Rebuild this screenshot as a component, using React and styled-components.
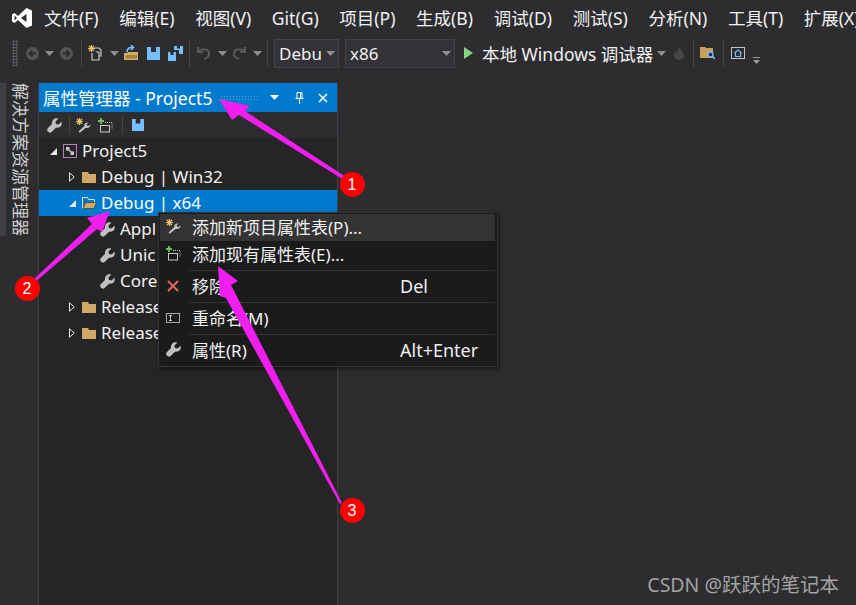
import React from 'react'
import styled, { createGlobalStyle } from 'styled-components'

const GlobalStyle = createGlobalStyle`
  html, body { margin: 0; padding: 0; background: #2d2d30; }
  body { font-family: "Noto Sans", "Noto Sans CJK SC", sans-serif; }
`

const Page = styled.div`
  position: relative;
  width: 856px;
  height: 605px;
  overflow: hidden;
  background: #2d2d30;
  color: #f1f1f1;
  font-size: 17.5px;
  display: flex;
  flex-direction: column;
`

const MenuBar = styled.div`
  height: 36px;
  display: flex;
  align-items: center;
  flex: none;
  box-sizing: border-box;
`

const LogoSlot = styled.div`
  width: 33.6px;
  flex: none;
  padding-left: 12px;
  box-sizing: border-box;
  display: flex;
`

const MenuItem = styled.div`
  padding: 0 10.35px;
  white-space: nowrap;
  flex: none;
  line-height: 24px;
`

const ToolBar = styled.div`
  height: 30px;
  margin-top: 2px;
  padding-left: 12px;
  display: flex;
  align-items: center;
  flex: none;
`

const Grip = styled.div`
  width: 6px;
  height: 26px;
  margin-right: 4px;
  flex: none;
  background-image: radial-gradient(circle, #55555a 1px, transparent 1.1px);
  background-size: 3px 3px;
`

const Tool = styled.div`
  width: ${p => p.$w}px;
  height: 22px;
  flex: none;
  display: flex;
  align-items: center;
  justify-content: center;
`

const Sep = styled.div`
  width: 1px;
  height: ${p => p.$h || 27}px;
  flex: none;
  margin-left: ${p => p.$l}px;
  margin-right: ${p => p.$r}px;
  background: #46464a;
`

const Combo = styled.div`
  width: ${p => p.$w}px;
  height: 29px;
  margin-right: ${p => p.$mr || 0}px;
  flex: none;
  box-sizing: border-box;
  border: 1px solid #434346;
  background: #333337;
  display: flex;
  align-items: center;
  justify-content: space-between;
  padding: 0 3px 0 4px;
  overflow: hidden;
  white-space: nowrap;
  font-size: 17px;
`

const RunLabel = styled.div`
  width: 170px;
  flex: none;
  white-space: nowrap;
`

const Body = styled.div`
  flex: 1;
  display: flex;
  margin-top: 15px;
  min-height: 0;
`

const SideRail = styled.div`
  width: 38px;
  flex: none;
  display: flex;
  align-items: flex-start;
  gap: 4px;
`

const RailBar = styled.div`
  width: 6px;
  height: 153px;
  background: #3f3f46;
`

const RailText = styled.div`
  writing-mode: vertical-rl;
  text-orientation: sideways;
  font-size: 17px;
  line-height: 20px;
  color: #d0d0d0;
  white-space: nowrap;
`

const Panel = styled.div`
  width: 300px;
  flex: none;
  box-sizing: border-box;
  background: #252526;
  border-left: 1px solid #3f3f46;
  border-right: 1px solid #3f3f46;
  display: flex;
  flex-direction: column;
`

const TitleBar = styled.div`
  height: 29px;
  flex: none;
  background: #007acc;
  color: #fff;
  display: flex;
  align-items: center;
  padding-left: 4px;
  font-size: 17.5px;
`

const TitleText = styled.div`
  width: 177px;
  flex: none;
  white-space: nowrap;
`

const TitleGrip = styled.div`
  width: 39px;
  height: 5px;
  flex: none;
  background-image: radial-gradient(circle, #59a8e0 0.8px, transparent 1px);
  background-size: 3px 3px;
`

const TitleButton = styled.div`
  width: ${p => p.$w}px;
  flex: none;
  display: flex;
  justify-content: center;
`

const PanelTools = styled.div`
  height: 26px;
  flex: none;
  background: #2d2d30;
  display: flex;
  align-items: center;
  padding-left: 5px;
`

const Tree = styled.div`
  display: flex;
  flex-direction: column;
  font-size: 17px;
`

const Row = styled.div`
  height: 26px;
  box-sizing: border-box;
  padding-bottom: 2px;
  display: flex;
  align-items: center;
  padding-left: ${p => p.$indent}px;
  background: ${p => (p.$selected ? '#007acc' : 'transparent')};
  color: ${p => (p.$selected ? '#fff' : '#f1f1f1')};
  white-space: nowrap;
`

const Twist = styled.div`
  width: 10px;
  flex: none;
  display: flex;
  justify-content: center;
  margin: 2px 4px 0 0;
`

const RowIcon = styled.div`
  width: 16px;
  flex: none;
  display: flex;
  justify-content: center;
  margin-top: 2px;
  margin-right: ${p => p.$gap}px;
`

const Menu = styled.div`
  position: absolute;
  left: 158px;
  top: 212px;
  width: 340px;
  box-sizing: border-box;
  padding: 1px 2px 2px 1px;
  background: #1b1b1c;
  border: 1px solid #333337;
  box-shadow: 2px 2px 4px rgba(0, 0, 0, 0.45);
  font-size: 17px;
`

const MenuRow = styled.div`
  height: 27px;
  box-sizing: border-box;
  padding-bottom: 2px;
  display: flex;
  align-items: center;
  background: ${p => (p.$hot ? '#333334' : 'transparent')};
`

const MenuIcon = styled.div`
  width: 26px;
  margin-right: 6px;
  flex: none;
  display: flex;
  justify-content: center;
`

const MenuLabel = styled.div`
  width: 208px;
  flex: none;
  white-space: nowrap;
`

const MenuKey = styled.div`
  font-size: 18px;
  white-space: nowrap;
`

const MenuSep = styled.div`
  height: 1px;
  margin: 2px 0 2px 29px;
  background: #333337;
`

const Overlay = styled.svg`
  position: absolute;
  left: 0;
  top: 0;
  pointer-events: none;
`

const Badge = styled.div`
  position: absolute;
  left: ${p => p.$x - 12.5}px;
  top: ${p => p.$y - 12.5}px;
  width: 25px;
  height: 25px;
  border-radius: 50%;
  background: #ff0000;
  color: #fff;
  font-family: "Liberation Sans", sans-serif;
  font-size: 16px;
  line-height: 25px;
  text-align: center;
`

const Watermark = styled.div`
  position: absolute;
  right: 17px;
  top: 572px;
  font-size: 19.5px;
  line-height: 26px;
  color: #a3a3a3;
  white-space: nowrap;
`

// little drawings
const Caret = ({ c = '#8f8f92' }) => (
  <svg width="9" height="5" viewBox="0 0 9 5"><path d="M0 0h9L4.500 5z" fill={c} /></svg>
)

const Logo = () => (
  <svg width="20" height="20" viewBox="0 0 20 20">
    <path fillRule="evenodd" fill="#fff" d="M14.500 0 20 2.500v15L14.500 20 6 12l-3.500 3L0 13.500v-7L2.500 5 6 8zM2.500 7.500v5L5 10zM14.500 6 9 10l5.500 4z" />
  </svg>
)

const NavIcon = ({ flip }) => (
  <svg width="13" height="13" viewBox="0 0 13 13">
    <circle cx="6.500" cy="6.500" r="6.500" fill="#555558" />
    <path d={flip ? 'M3 6.500h6M6.500 3.500l3 3-3 3' : 'M10 6.500H4M6.500 3.500l-3 3 3 3'} stroke="#2d2d30" strokeWidth="2" fill="none" />
  </svg>
)

const Spark = ({ x = 0, y = 0 }) => (
  <path transform={`translate(${x} ${y})`} d="M3.500 0v7M0 3.500h7M1 1l5 5M6 1 1 6" stroke="#e8c26b" strokeWidth="1.200" fill="none" />
)

const NewProjectIcon = () => (
  <svg width="14" height="16" viewBox="0 0 14 16">
    <path d="M6 3h5l2 2v6h-2M4 8v7h7V7H8" stroke="#c8c8c8" strokeWidth="1.200" fill="none" />
    <Spark />
  </svg>
)

const OpenIcon = () => (
  <svg width="15" height="16" viewBox="0 0 15 16">
    <path d="M0 15V8h3l1-1h10v8z" fill="#d4ab68" />
    <path d="M1 13.500 2.500 10H13v3.500z" fill="#a5823f" />
    <path d="M3 7c0-3.500 3-5 5.500-4.500M7 0l2.500 2.500L7 5" stroke="#75beff" strokeWidth="1.600" fill="none" />
  </svg>
)

const SaveIcon = ({ size = 13 }) => (
  <svg width={size} height={size} viewBox="0 0 13 13">
    <path fillRule="evenodd" d="M0 0h13v13H0zM4 0v5h5V0z" fill="#75beff" />
  </svg>
)

const SaveAllIcon = () => (
  <svg width="15" height="15" viewBox="0 0 15 15">
    <path fillRule="evenodd" d="M6 0h9v8h-4V4H6zM9 0v2.500h3V0z" fill="#75beff" />
    <path fillRule="evenodd" d="M0 6h8v9H0zM2.500 6v3h3V6z" fill="#75beff" />
  </svg>
)

const UndoIcon = ({ flip }) => (
  <svg width="14" height="14" viewBox="0 0 14 14" style={flip ? { transform: 'scaleX(-1)' } : undefined}>
    <path d="M1 1v5h5M1.500 5.500C4 2.500 11 2.500 12 6.500c.5 3-2 5.500-5 6.500" stroke="#5a5a5d" strokeWidth="2" fill="none" />
  </svg>
)

const PlayIcon = () => (
  <svg width="9" height="12" viewBox="0 0 9 12"><path d="M0 0l9 6-9 6z" fill="#89d185" /></svg>
)

const FlameIcon = () => (
  <svg width="10" height="13" viewBox="0 0 10 13">
    <path d="M5 0c1 2.500 5 4.500 5 8.500S7 13 5 13 0 11.500 0 8.500c0-2 1-3 1.500-4 .5 1 1 1.500 1.500 1.500C3 4 4 2 5 0z" fill="#474749" />
  </svg>
)

const FolderSearchIcon = () => (
  <svg width="15" height="14" viewBox="0 0 15 14">
    <path d="M0 1h5l1 1h7v10H0z" fill="#c9a15f" />
    <circle cx="10.500" cy="8.500" r="2.500" fill="#2d2d30" stroke="#75beff" strokeWidth="1.300" />
    <path d="M12.500 10.500 15 13" stroke="#75beff" strokeWidth="1.600" />
  </svg>
)

const HomeIcon = () => (
  <svg width="14" height="12" viewBox="0 0 14 12">
    <rect x=".5" y=".5" width="13" height="11" fill="none" stroke="#c4c4c4" />
    <path d="M3.500 6 7 3l3.500 3M4.500 5.500V9.500h5V5.500" fill="none" stroke="#75beff" strokeWidth="1.100" />
  </svg>
)

const OverflowIcon = () => (
  <svg width="7" height="7" viewBox="0 0 7 7" style={{ marginTop: 14 }}>
    <path d="M0 .5h7" stroke="#999" />
    <path d="M0 3h7L3.500 7z" fill="#999" />
  </svg>
)

const PinIcon = () => (
  <svg width="9" height="12" viewBox="0 0 9 12">
    <path d="M2 .5h5v6H2zM.5 6.500h8M4.500 7v5M5.500 1v5" stroke="#fff" fill="none" />
  </svg>
)

const CloseIcon = () => (
  <svg width="10" height="10" viewBox="0 0 10 10">
    <path d="M1 1l8 8M9 1 1 9" stroke="#fff" strokeWidth="1.500" />
  </svg>
)

const WrenchIcon = ({ size = 15 }) => (
  <svg width={size} height={size} viewBox="0 0 16 16">
    <path d="M15.500 4 12.300 7 9.500 6.500 9 3.700 12 .8C9-.6 5 1.500 5.300 6.300L.8 11c-1.200 1.200-.4 3 .4 3.700.8.800 2.500 1.400 3.700.3l4.700-4.500C14 10.800 16.700 8 15.500 4z" fill="#c0c0c0" />
  </svg>
)

const WandWrenchIcon = () => (
  <svg width="15" height="15" viewBox="0 0 15 15">
    <path d="M14.500 6.500 12.500 8 11 7.500l-.3-1.500L12.500 4.500C10.500 4 8 5 8.300 8L3 13c-.6.8.2 2 1.200 1.500L9.500 10c2.500.5 5.500-1 5-3.500z" fill="#c0c0c0" />
    <Spark />
  </svg>
)

const AddExistingIcon = () => (
  <svg width="15" height="15" viewBox="0 0 15 15">
    <path d="M3 0v6M0 3h6" stroke="#6cc35a" strokeWidth="1.800" />
    <rect x="2.500" y="7.500" width="9" height="6.500" fill="none" stroke="#c8c8c8" />
    <path d="M7 4.500h7v7" fill="none" stroke="#c8c8c8" strokeDasharray="1 1" />
  </svg>
)

const RemoveIcon = () => (
  <svg width="12" height="12" viewBox="0 0 12 12">
    <path d="M1 1l10 10M11 1 1 11" stroke="#e0685a" strokeWidth="2" />
  </svg>
)

const RenameIcon = () => (
  <svg width="14" height="10" viewBox="0 0 14 10">
    <rect x=".5" y=".5" width="13" height="9" fill="none" stroke="#a8a8a8" />
    <path d="M3 2.500h3M3 7.500h3M4.500 2.500v5" stroke="#c8c8c8" />
  </svg>
)

const ProjectIcon = () => (
  <svg width="14" height="14" viewBox="0 0 14 14">
    <rect x=".5" y=".5" width="13" height="13" fill="none" stroke="#b180b8" />
    <path d="M3 3h3.500v3.500H3zM7.500 7.500H11V11H7.500z" fill="#c8c8c8" />
    <path d="M6 6l2 2" stroke="#c8c8c8" strokeWidth="1.500" />
  </svg>
)

const FolderIcon = () => (
  <svg width="14" height="11" viewBox="0 0 14 11">
    <path d="M0 0h6l1 2h7v9H0z" fill="#d0a868" />
  </svg>
)

const OpenFolderIcon = () => (
  <svg width="15" height="12" viewBox="0 0 15 12">
    <path d="M.5 11.500V.5h5l1 2h6v3" fill="none" stroke="#e8e0d0" />
    <path d="M1 11.500 3.500 5.500H14.500L12 11.500z" fill="#d0a868" stroke="#3a2a10" strokeWidth=".6" />
  </svg>
)

const TwistOpen = () => (
  <svg width="7" height="7" viewBox="0 0 7 7"><path d="M7 0v7H0z" fill="#e8e8e8" /></svg>
)

const TwistClosed = () => (
  <svg width="6" height="10" viewBox="0 0 6 10"><path d="M.5.800 5.200 5 .5 9.200z" fill="none" stroke="#e8e8e8" /></svg>
)

const menus = ['文件(F)', '编辑(E)', '视图(V)', 'Git(G)', '项目(P)', '生成(B)', '调试(D)', '测试(S)', '分析(N)', '工具(T)', '扩展(X)']

export default function App() {
  return (
    <Page>
      <GlobalStyle />
      <MenuBar>
        <LogoSlot><Logo /></LogoSlot>
        {menus.map(m => <MenuItem key={m}>{m}</MenuItem>)}
      </MenuBar>

      <ToolBar>
        <Grip />
        <Tool $w={20}><NavIcon /></Tool>
        <Tool $w={14}><Caret /></Tool>
        <Tool $w={20}><NavIcon flip /></Tool>
        <Sep $l={5} $r={3} />
        <Tool $w={20}><NewProjectIcon /></Tool>
        <Tool $w={18}><Caret /></Tool>
        <Tool $w={16}><OpenIcon /></Tool>
        <Tool $w={28}><SaveIcon /></Tool>
        <Tool $w={16}><SaveAllIcon /></Tool>
        <Sep $l={6} $r={5} />
        <Tool $w={18}><UndoIcon /></Tool>
        <Tool $w={18}><Caret /></Tool>
        <Tool $w={16}><UndoIcon flip /></Tool>
        <Tool $w={20}><Caret /></Tool>
        <Sep $l={0} $r={6} />
        <Combo $w={65} $mr={6}>Debu<Caret /></Combo>
        <Combo $w={110}>x86<Caret /></Combo>
        <Tool $w={27}><PlayIcon /></Tool>
        <RunLabel>本地 Windows 调试器</RunLabel>
        <Tool $w={18}><Caret /></Tool>
        <Tool $w={18}><FlameIcon /></Tool>
        <Sep $l={5} $r={5} />
        <Tool $w={16}><FolderSearchIcon /></Tool>
        <Sep $l={8} $r={5} />
        <Tool $w={18}><HomeIcon /></Tool>
        <Tool $w={18}><OverflowIcon /></Tool>
      </ToolBar>

      <Body>
        <SideRail>
          <RailBar />
          <RailText>解决方案资源管理器</RailText>
        </SideRail>
        <Panel>
          <TitleBar>
            <TitleText>属性管理器 - Project5</TitleText>
            <TitleGrip />
            <TitleButton $w={30}><Caret c="#fff" /></TitleButton>
            <TitleButton $w={20}><PinIcon /></TitleButton>
            <TitleButton $w={28}><CloseIcon /></TitleButton>
          </TitleBar>
          <PanelTools>
            <Tool $w={20}><WrenchIcon /></Tool>
            <Sep $l={5} $r={3} $h={18} />
            <Tool $w={20}><WandWrenchIcon /></Tool>
            <Tool $w={24}><AddExistingIcon /></Tool>
            <Sep $l={5} $r={6} $h={18} />
            <Tool $w={18}><SaveIcon size={12} /></Tool>
          </PanelTools>
          <Tree>
            <Row $indent={9}>
              <Twist><TwistOpen /></Twist>
              <RowIcon $gap={4}><ProjectIcon /></RowIcon>Project5
            </Row>
            <Row $indent={28}>
              <Twist><TwistClosed /></Twist>
              <RowIcon $gap={4}><FolderIcon /></RowIcon>Debug | Win32
            </Row>
            <Row $indent={28} $selected>
              <Twist><TwistOpen /></Twist>
              <RowIcon $gap={4}><OpenFolderIcon /></RowIcon>Debug | x64
            </Row>
            <Row $indent={60}><RowIcon $gap={5}><WrenchIcon /></RowIcon>Appl</Row>
            <Row $indent={60}><RowIcon $gap={5}><WrenchIcon /></RowIcon>Unic</Row>
            <Row $indent={60}><RowIcon $gap={5}><WrenchIcon /></RowIcon>Core</Row>
            <Row $indent={28}>
              <Twist><TwistClosed /></Twist>
              <RowIcon $gap={4}><FolderIcon /></RowIcon>Release
            </Row>
            <Row $indent={28}>
              <Twist><TwistClosed /></Twist>
              <RowIcon $gap={4}><FolderIcon /></RowIcon>Release
            </Row>
          </Tree>
        </Panel>
      </Body>

      <Menu>
        <MenuRow $hot>
          <MenuIcon><WandWrenchIcon /></MenuIcon>
          <MenuLabel>添加新项目属性表(P)...</MenuLabel>
        </MenuRow>
        <MenuRow>
          <MenuIcon><AddExistingIcon /></MenuIcon>
          <MenuLabel>添加现有属性表(E)...</MenuLabel>
        </MenuRow>
        <MenuSep />
        <MenuRow>
          <MenuIcon><RemoveIcon /></MenuIcon>
          <MenuLabel>移除</MenuLabel>
          <MenuKey>Del</MenuKey>
        </MenuRow>
        <MenuSep />
        <MenuRow>
          <MenuIcon><RenameIcon /></MenuIcon>
          <MenuLabel>重命名(M)</MenuLabel>
        </MenuRow>
        <MenuSep />
        <MenuRow>
          <MenuIcon><WrenchIcon /></MenuIcon>
          <MenuLabel>属性(R)</MenuLabel>
          <MenuKey>Alt+Enter</MenuKey>
        </MenuRow>
      </Menu>

      <Overlay width="856" height="605" viewBox="0 0 856 605">
        <polygon fill="#f01ff0" points="219,99 250,106 245,111 346,177 344,180 239,115 232,120" />
        <polygon fill="#f01ff0" points="110,211 87,218 92,224 32,281 34,283 97,229 102,232" />
        <polygon fill="#f01ff0" points="218,266 238,281 231,285 342,503 340,504 226,298 220,296" />
      </Overlay>
      <Badge $x={352} $y={184}>1</Badge>
      <Badge $x={27} $y={288}>2</Badge>
      <Badge $x={352} $y={510}>3</Badge>
      <Watermark>CSDN @跃跃的笔记本</Watermark>
    </Page>
  )
}
